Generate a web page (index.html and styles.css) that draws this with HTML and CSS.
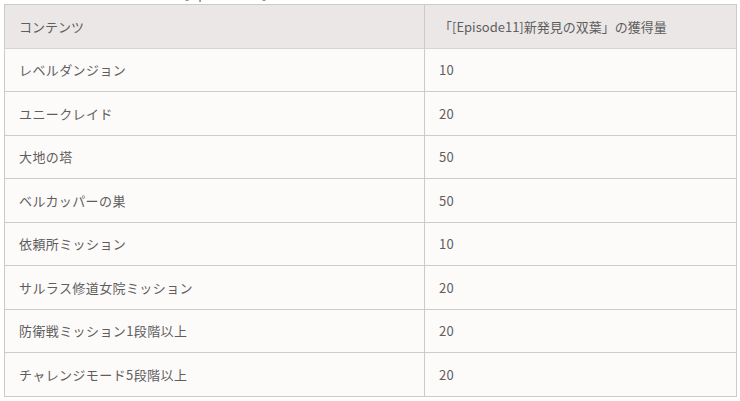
FILE: index.html
```html
<!DOCTYPE html>
<html lang="ja">
<head>
<meta charset="utf-8">
<link rel="stylesheet" href="styles.css">
</head>
<body>
<div class="caption"><span class="caption-text">[Episode11]</span></div>
<table class="reward-table">
  <thead>
    <tr><th class="col-content">コンテンツ</th><th class="col-amount">「[Episode11]新発見の双葉」の獲得量</th></tr>
  </thead>
  <tbody>
    <tr><td>レベルダンジョン</td><td>10</td></tr>
    <tr><td>ユニークレイド</td><td>20</td></tr>
    <tr><td>大地の塔</td><td>50</td></tr>
    <tr><td>ベルカッパーの巣</td><td>50</td></tr>
    <tr><td>依頼所ミッション</td><td>10</td></tr>
    <tr><td>サルラス修道女院ミッション</td><td>20</td></tr>
    <tr><td>防衛戦ミッション1段階以上</td><td>20</td></tr>
    <tr><td>チャレンジモード5段階以上</td><td>20</td></tr>
  </tbody>
</table>
</body>
</html>
```
FILE: styles.css
```css
html, body {
  margin: 0;
  padding: 0;
  background: #ffffff;
}
body {
  font-family: "Noto Sans CJK JP", "Noto Sans", sans-serif;
  color: #5e5e5e;
}
.caption {
  height: 4px;
  overflow: hidden;
  padding-left: 184px;
}
.caption-text {
  display: block;
  font-size: 14.5px;
  line-height: 14px;
  margin-top: -15px;
  letter-spacing: 0.3px;
  color: #777;
}
.reward-table {
  margin-left: 4px;
  width: 733px;
  border-collapse: collapse;
  border: 1px solid #8f8f8f;
  font-size: 13px;
  table-layout: fixed;
}
.reward-table th,
.reward-table td {
  text-align: left;
  font-weight: normal;
  padding: 0 13px 0 14px;
  height: 42.5px;
  border: 1px solid #cfcaca;
  vertical-align: middle;
}
.reward-table th {
  background: #ece7e7;
  border-bottom-color: #d9d4d4;
}
.reward-table td {
  background: #fdfafa;
  letter-spacing: 0.4px;
}
.col-content {
  width: 392px;
}
```
